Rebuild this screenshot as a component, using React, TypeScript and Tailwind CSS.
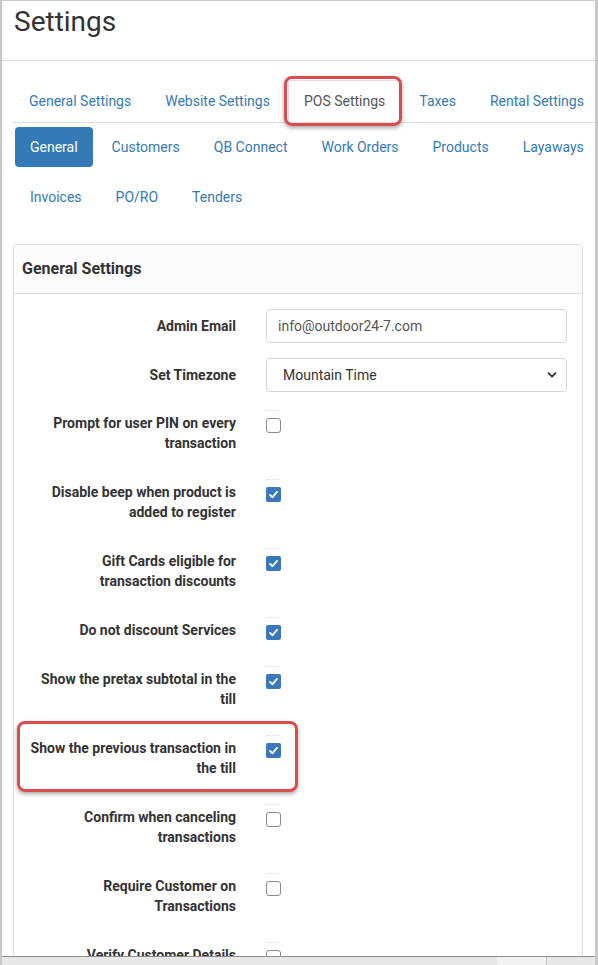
import React from "react";

const topTabs = ["General Settings", "Website Settings", "POS Settings", "Taxes", "Rental Settings"];
const pillRows = [
	["General", "Customers", "QB Connect", "Work Orders", "Products", "Layaways"],
	["Invoices", "PO/RO", "Tenders"],
];

const rows = [
	{ label: ["Prompt for user PIN on every", "transaction"], checked: false },
	{ label: ["Disable beep when product is", "added to register"], checked: true },
	{ label: ["Gift Cards eligible for", "transaction discounts"], checked: true },
	{ label: ["Do not discount Services"], checked: true },
	{ label: ["Show the pretax subtotal in the", "till"], checked: true },
	{ label: ["Show the previous transaction in", "the till"], checked: true, highlight: true },
	{ label: ["Confirm when canceling", "transactions"], checked: false },
	{ label: ["Require Customer on", "Transactions"], checked: false },
	{ label: ["Verify Customer Details"], checked: false },
];

function Checkbox({ checked }: { checked: boolean }) {
	if (checked) {
		return (
			<div className="w-[15px] h-[15px] rounded-[2px] bg-[#3a78b9] flex items-center justify-center">
				<svg width="11" height="11" viewBox="0 0 12 12" fill="none">
					<polyline points="2.2 6.4 4.9 9 9.8 3.2" stroke="white" strokeWidth="2" strokeLinecap="round" strokeLinejoin="round" />
				</svg>
			</div>
		);
	}
	return <div className="w-[15px] h-[15px] rounded-[3px] border border-[#8a8a8a] bg-white" />;
}

export default function App() {
	return (
		<div className="w-[598px] h-[965px] overflow-hidden bg-white border-t border-l-2 border-r-[3px] border-[#c9c9c9] flex flex-col font-['Roboto',sans-serif] text-[14px] text-[#333]">
			<div className="flex-1 min-h-0 overflow-hidden">
				<h1 className="px-[12px] pt-[4px] text-[28px] leading-[34px] font-normal text-[#333]">Settings</h1>
				<div className="mt-[21px] h-px bg-[#dddddd]" />

				<div className="pl-[11px] pr-[12px]">
					{/* main tabs */}
					<div className="mt-[19px] -mr-[12px] flex flex-nowrap border-b border-[#dddddd]">
						{topTabs.map((t) => {
							const active = t === "POS Settings";
							return (
								<div key={t} className="relative mr-[2px] shrink-0">
									<div
										className={
											active
												? "px-[15px] py-[10px] leading-[20px] border border-[#dddddd] border-b-transparent rounded-t-[4px] text-[#555] whitespace-nowrap -mb-px bg-white"
												: "px-[15px] py-[10px] leading-[20px] border border-transparent text-[#337ab7] whitespace-nowrap"
										}
									>
										{t}
									</div>
									{active && (
										<div className="absolute -left-[4px] -top-[4px] w-[118px] h-[50px] rounded-[8px] border-[3px] border-[#dc4c4c] shadow-[0_2px_4px_rgba(0,0,0,0.35)]" />
									)}
								</div>
							);
						})}
					</div>

					{/* sub pills */}
					<div className="mt-[4px] ml-[2px] flex flex-col gap-y-[10px]">
						{pillRows.map((r, i) => (
							<div key={i} className="flex flex-nowrap">
								{r.map((p) => (
									<div
										key={p}
										className={
											p === "General"
												? "mr-[4px] shrink-0 px-[15px] py-[10px] leading-[20px] rounded-[4px] bg-[#337ab7] text-white whitespace-nowrap"
												: "mr-[4px] shrink-0 px-[15px] py-[10px] leading-[20px] text-[#337ab7] whitespace-nowrap"
										}
									>
										{p}
									</div>
								))}
							</div>
						))}
					</div>

					{/* panel */}
					<div className="mt-[27px] border border-[#dddddd] rounded-[4px]">
						<div className="h-[49px] flex items-center px-[8px] border-b border-[#dddddd] bg-[#fcfcfc] rounded-t-[4px]">
							<span className="text-[16px] font-bold text-[#333]">General Settings</span>
						</div>
						<div className="px-[15px] pt-[15px]">
							<div className="flex items-center h-[34px] mb-[15px]">
								<div className="w-[207px] text-right font-bold">Admin Email</div>
								<div className="ml-[30px] w-[301px] h-[34px] border border-[#d6d6d6] rounded-[4px] flex items-center px-[11px] text-[#555]">
									info@outdoor24-7.com
								</div>
							</div>
							<div className="flex items-center h-[34px] mb-[21px]">
								<div className="w-[207px] text-right font-bold">Set Timezone</div>
								<div className="ml-[30px] w-[301px] h-[34px] border border-[#d6d6d6] rounded-[4px] flex items-center justify-between pl-[16px] pr-[9px] text-[#333]">
									<span>Mountain Time</span>
									<svg width="10" height="10" viewBox="0 0 10 10" fill="none">
										<path d="M1.5 3.2 5 6.7 8.5 3.2" stroke="#333" strokeWidth="1.8" strokeLinecap="round" strokeLinejoin="round" />
									</svg>
								</div>
							</div>

							{rows.map((r, i) => (
								<div key={i} className="relative flex mb-[29px]">
									<div className="w-[207px] text-right font-bold leading-[20px]">
										{r.label.map((l, j) => (
											<div key={j} className="whitespace-nowrap">{l}</div>
										))}
									</div>
									<div className="ml-[30px] -mt-[3px] flex flex-col">
										<div className="h-px w-[14px] bg-[#ebebeb]" />
										<div className="mt-[7px]">
											<Checkbox checked={r.checked} />
										</div>
									</div>
									{r.highlight && (
										<div className="absolute -left-[12px] -top-[17px] w-[281px] h-[71px] rounded-[8px] border-[3px] border-[#dc4c4c] shadow-[0_2px_4px_rgba(0,0,0,0.35)]" />
									)}
								</div>
							))}
						</div>
					</div>
				</div>
			</div>
			<div className="h-[9px] shrink-0 border-t border-[#8c8c8c] bg-[#e8e8e8] flex">
				<div className="w-[495px]" />
				<div className="w-[50px] bg-[#f2f2f2] border-r border-[#c4c4c4]" />
			</div>
		</div>
	);
}
